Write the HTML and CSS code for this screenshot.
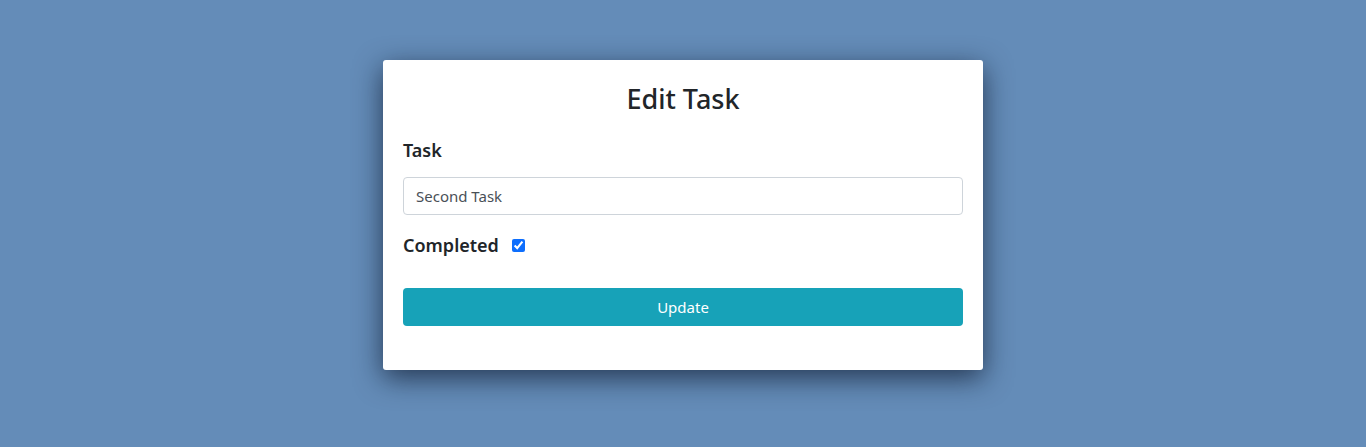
FILE: index.html
```html
<!DOCTYPE html>
<html lang="en">
<head>
<meta charset="utf-8">
<title>Edit Task</title>
<link rel="stylesheet" href="styles.css">
</head>
<body>
<main class="page">
  <form class="card">
    <h2 class="card-title">Edit Task</h2>
    <label class="field-label" for="task">Task</label>
    <input class="text-input" id="task" type="text" value="Second Task">
    <div class="check-row">
      <label class="field-label" for="done">Completed</label>
      <input class="check" id="done" type="checkbox" checked>
    </div>
    <button class="btn-update" type="button">Update</button>
  </form>
</main>
</body>
</html>
```
FILE: styles.css
```css
* { box-sizing: border-box; }
html, body { margin: 0; padding: 0; }
body {
  background: #648cb8;
  font-family: "Noto Sans", "Open Sans", "Liberation Sans", sans-serif;
  color: #212529;
  height: 447px;
  overflow: hidden;
}
.page {
  display: flex;
  justify-content: center;
  padding-top: 60px;
}
.card {
  width: 600px;
  background: #fff;
  border-radius: 3px;
  padding: 20px 20px 44px;
  box-shadow: 0 8px 28px rgba(10, 20, 40, 0.7);
  display: flex;
  flex-direction: column;
}
.card-title {
  margin: 0;
  font-size: 27px;
  font-weight: 500;
  line-height: 38px;
  text-align: center;
}
.field-label {
  font-size: 18px;
  font-weight: 600;
  line-height: 24px;
}
.card-title + .field-label { margin-top: 20px; }
.text-input {
  margin-top: 15px;
  height: 38px;
  width: 100%;
  border: 1px solid #ced4da;
  border-radius: 4px;
  padding: 0 12px;
  font-family: inherit;
  font-size: 15px;
  color: #495057;
  outline: none;
}
.check-row {
  margin-top: 18px;
  display: flex;
  align-items: center;
  gap: 13px;
}
.check {
  width: 13px;
  height: 13px;
  margin: 0;
  accent-color: #0d6efd;
}
.btn-update {
  margin-top: 31px;
  height: 38px;
  width: 100%;
  border: none;
  border-radius: 4px;
  background: #17a2b8;
  color: #fff;
  font-family: inherit;
  font-size: 15px;
  cursor: pointer;
}
```
